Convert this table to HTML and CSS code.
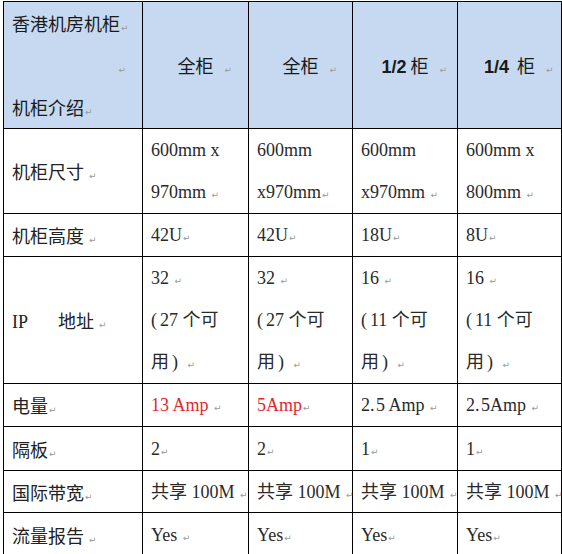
FILE: index.html
```html
<!DOCTYPE html>
<html lang="zh-CN">
<head>
<meta charset="utf-8">
<title>香港机房机柜</title>
<link rel="stylesheet" href="styles.css">
</head>
<body>
<table class="spec">
  <colgroup>
    <col class="c1"><col class="c2"><col class="c3"><col class="c4"><col class="c5">
  </colgroup>
  <tr class="r-head">
    <th class="corner">
      <div>香港机房机柜<span class="pm">↵</span></div>
      <div class="right"><span class="pm">↵</span></div>
      <div>机柜介绍<span class="pm">↵</span></div>
    </th>
    <th class="hc">全柜<span class="pm-z"><span class="pm">↵</span></span></th>
    <th class="hc">全柜<span class="pm-z"><span class="pm">↵</span></span></th>
    <th class="hc"><b class="lat">1/2</b> 柜<span class="pm-z"><span class="pm">↵</span></span></th>
    <th class="hc"><b class="lat">1/4</b>&nbsp; 柜<span class="pm-z"><span class="pm">↵</span></span></th>
  </tr>
  <tr class="r84">
    <td class="lbl">机柜尺寸 <span class="pm">↵</span></td>
    <td class="val">600mm x<br>970mm <span class="pm">↵</span></td>
    <td class="val">600mm<br>x970mm<span class="pm">↵</span></td>
    <td class="val">600mm<br>x970mm <span class="pm">↵</span></td>
    <td class="val">600mm x<br>800mm <span class="pm">↵</span></td>
  </tr>
  <tr class="r43">
    <td class="lbl">机柜高度 <span class="pm">↵</span></td>
    <td class="val">42U<span class="pm">↵</span></td>
    <td class="val">42U<span class="pm">↵</span></td>
    <td class="val">18U<span class="pm">↵</span></td>
    <td class="val">8U<span class="pm">↵</span></td>
  </tr>
  <tr class="r126">
    <td class="lbl"><span class="lat-s">IP</span><span class="gap"></span>地址 <span class="pm">↵</span></td>
    <td class="val">32 <span class="pm">↵</span><br><span class="po">(</span>27 个可<br>用<span class="pc">)</span> <span class="pm">↵</span></td>
    <td class="val">32 <span class="pm">↵</span><br><span class="po">(</span>27 个可<br>用<span class="pc">)</span> <span class="pm">↵</span></td>
    <td class="val">16 <span class="pm">↵</span><br><span class="po">(</span>11 个可<br>用<span class="pc">)</span> <span class="pm">↵</span></td>
    <td class="val">16 <span class="pm">↵</span><br><span class="po">(</span>11 个可<br>用<span class="pc">)</span> <span class="pm">↵</span></td>
  </tr>
  <tr class="r43">
    <td class="lbl">电量<span class="pm">↵</span></td>
    <td class="val red">13 Amp <span class="pm">↵</span></td>
    <td class="val red">5Amp<span class="pm">↵</span></td>
    <td class="val">2.&#8202;5 Amp <span class="pm">↵</span></td>
    <td class="val">2.&#8202;5Amp <span class="pm">↵</span></td>
  </tr>
  <tr class="r44">
    <td class="lbl">隔板<span class="pm">↵</span></td>
    <td class="val">2<span class="pm">↵</span></td>
    <td class="val">2<span class="pm">↵</span></td>
    <td class="val">1<span class="pm">↵</span></td>
    <td class="val">1<span class="pm">↵</span></td>
  </tr>
  <tr class="r42">
    <td class="lbl">国际带宽<span class="pm">↵</span></td>
    <td class="val">共享 100M <span class="pm">↵</span></td>
    <td class="val">共享 100M <span class="pm">↵</span></td>
    <td class="val">共享 100M <span class="pm">↵</span></td>
    <td class="val">共享 100M <span class="pm">↵</span></td>
  </tr>
  <tr class="r44">
    <td class="lbl">流量报告 <span class="pm">↵</span></td>
    <td class="val">Yes <span class="pm">↵</span></td>
    <td class="val">Yes<span class="pm">↵</span></td>
    <td class="val">Yes<span class="pm">↵</span></td>
    <td class="val">Yes<span class="pm">↵</span></td>
  </tr>
</table>
</body>
</html>
```
FILE: styles.css
```css
html, body {
  margin: 0;
  padding: 0;
  background: #ffffff;
}

.spec {
  margin: 1px 0 0 3px;
  width: 558px;
  table-layout: fixed;
  border-collapse: collapse;
  color: #222;
  font-size: 18px;
  line-height: 42px;
}

.c1 { width: 139px; }
.c2 { width: 106px; }
.c3 { width: 104px; }
.c4 { width: 105px; }
.c5 { width: 104px; }

.spec th,
.spec td {
  border: 1px solid #000;
  padding: 0 0 0 8px;
  vertical-align: middle;
  text-align: left;
  font-weight: normal;
  white-space: nowrap;
  overflow: visible;
}

.spec th {
  background: #c6d9f1;
  font-family: "Noto Sans CJK SC", "Liberation Sans", sans-serif;
  color: #1a1a1a;
}

.spec th.hc {
  text-align: center;
  padding: 0;
}

.corner div {
  height: 42px;
}

.corner .right {
  text-align: right;
  padding-right: 16px;
}

.lat {
  font-family: "Liberation Sans", Arial, sans-serif;
  font-weight: bold;
  line-height: 0;
}

.lbl {
  font-family: "Noto Sans CJK SC", sans-serif;
}

.lat-s {
  font-family: "Liberation Serif", serif;
  line-height: 0;
}

.gap {
  display: inline-block;
  width: 30px;
  height: 1px;
}

.val {
  font-family: "Liberation Serif", "Noto Sans CJK SC", serif;
  color: #2a2a2a;
}

.po {
  margin-right: 3px;
}

.pc {
  margin-left: 3px;
  margin-right: 4px;
}

.red {
  color: #e3262f;
}

.pm {
  font-family: "DejaVu Sans", sans-serif;
  font-size: 9px;
  line-height: 0;
  color: #9a9a9a;
  font-weight: normal;
  margin-left: 1px;
}

.pm-z {
  display: inline-block;
  width: 0;
  line-height: 0;
  white-space: nowrap;
  text-align: left;
}

.pm-z .pm {
  margin-left: 11px;
}

.r-head { height: 126px; }
.r84 { height: 84px; }
.r43 { height: 43px; }
.r126 { height: 126px; }
.r44 { height: 44px; }
.r42 { height: 42px; }

.r43 td, .r44 td, .r42 td {
  line-height: 40px;
}
```
